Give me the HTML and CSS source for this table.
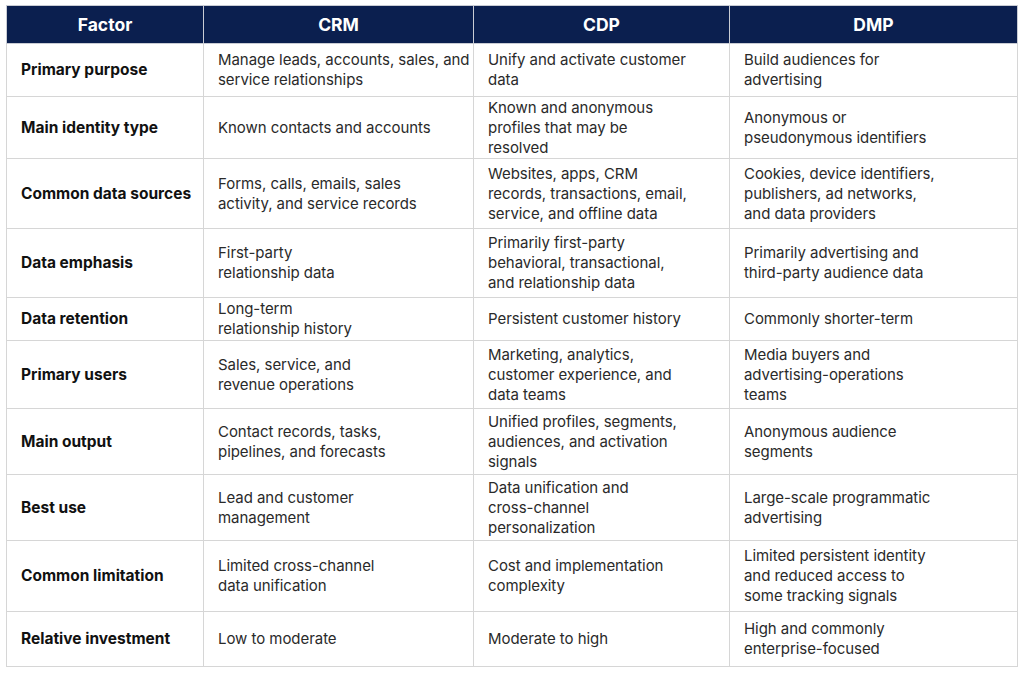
FILE: index.html
```html
<!DOCTYPE html>
<html>
<head>
<meta charset="utf-8">
<link rel="stylesheet" href="styles.css">
</head>
<body>
<table class="cmp">
  <colgroup>
    <col class="c-factor"><col class="c-crm"><col class="c-cdp"><col class="c-dmp">
  </colgroup>
  <thead>
    <tr class="r-head"><th>Factor</th><th>CRM</th><th>CDP</th><th>DMP</th></tr>
  </thead>
  <tbody>
    <tr class="r1"><th>Primary purpose</th><td>Manage leads, accounts, sales, and<br>service relationships</td><td>Unify and activate customer<br>data</td><td>Build audiences for<br>advertising</td></tr>
    <tr class="r2"><th>Main identity type</th><td>Known contacts and accounts</td><td>Known and anonymous<br>profiles that may be<br>resolved</td><td>Anonymous or<br>pseudonymous identifiers</td></tr>
    <tr class="r3"><th>Common data sources</th><td>Forms, calls, emails, sales<br>activity, and service records</td><td>Websites, apps, CRM<br>records, transactions, email,<br>service, and offline data</td><td>Cookies, device identifiers,<br>publishers, ad networks,<br>and data providers</td></tr>
    <tr class="r4"><th>Data emphasis</th><td>First-party<br>relationship data</td><td>Primarily first-party<br>behavioral, transactional,<br>and relationship data</td><td>Primarily advertising and<br>third-party audience data</td></tr>
    <tr class="r5"><th>Data retention</th><td>Long-term<br>relationship history</td><td>Persistent customer history</td><td>Commonly shorter-term</td></tr>
    <tr class="r6"><th>Primary users</th><td>Sales, service, and<br>revenue operations</td><td>Marketing, analytics,<br>customer experience, and<br>data teams</td><td>Media buyers and<br>advertising-operations<br>teams</td></tr>
    <tr class="r7"><th>Main output</th><td>Contact records, tasks,<br>pipelines, and forecasts</td><td>Unified profiles, segments,<br>audiences, and activation<br>signals</td><td>Anonymous audience<br>segments</td></tr>
    <tr class="r8"><th>Best use</th><td>Lead and customer<br>management</td><td>Data unification and<br>cross-channel<br>personalization</td><td>Large-scale programmatic<br>advertising</td></tr>
    <tr class="r9"><th>Common limitation</th><td>Limited cross-channel<br>data unification</td><td>Cost and implementation<br>complexity</td><td>Limited persistent identity<br>and reduced access to<br>some tracking signals</td></tr>
    <tr class="r10"><th>Relative investment</th><td>Low to moderate</td><td>Moderate to high</td><td>High and commonly<br>enterprise-focused</td></tr>
  </tbody>
</table>
</body>
</html>
```
FILE: styles.css
```css
html, body {
  margin: 0;
  padding: 0;
  background: #ffffff;
}
body {
  padding: 5px 0 0 6px;
  font-family: Inter, "Liberation Sans", sans-serif;
  color: #2a2a2a;
}
.cmp {
  border-collapse: collapse;
  width: 1011px;
  table-layout: fixed;
}
.c-factor { width: 197px; }
.c-crm { width: 270px; }
.c-cdp { width: 256px; }
.c-dmp { width: 288px; }

.cmp th, .cmp td {
  border: 1px solid #d6d6d6;
  vertical-align: middle;
  padding: 0 4px 0 14px;
  font-size: 15px;
  line-height: 20px;
  text-align: left;
  white-space: nowrap;
}
.cmp td {
  font-weight: 400;
  letter-spacing: -0.05px;
}
.cmp thead th {
  background: #0b1f4f;
  color: #ffffff;
  font-weight: 700;
  font-size: 17.5px;
  text-align: center;
  padding: 0;
  border-color: #c9ccd4;
}
.cmp tbody th {
  font-weight: 700;
  font-size: 15.5px;
  color: #111111;
}

.r-head { height: 38px; }
.r1 { height: 53px; }
.r2 { height: 62px; }
.r3 { height: 70px; }
.r4 { height: 69px; }
.r5 { height: 43px; }
.r6 { height: 68px; }
.r7 { height: 66px; }
.r8 { height: 66px; }
.r9 { height: 71px; }
.r10 { height: 55px; }
```
